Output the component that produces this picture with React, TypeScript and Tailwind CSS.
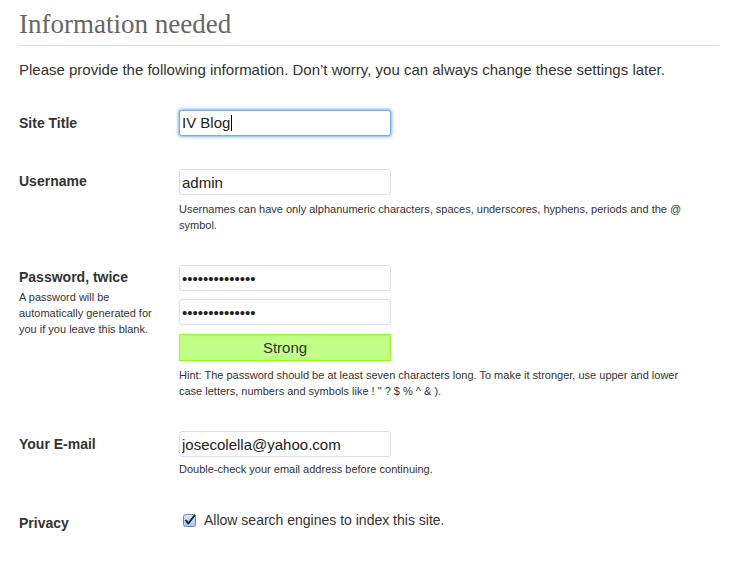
import { useState } from "react";

const labelCls = "w-[160px] shrink-0 text-[14px] font-bold text-[#333]";
const inputCls =
  "block w-[212px] h-[26px] px-[2px] rounded-[3px] border border-[#dfdfdf] bg-white text-[15px] text-[#222] outline-none";

function CheckIcon() {
  return (
    <svg width="13" height="13" viewBox="0 0 13 13" className="shrink-0">
      <defs>
        <linearGradient id="cb" x1="0" y1="0" x2="0" y2="1">
          <stop offset="0" stopColor="#dbe8f8" />
          <stop offset="1" stopColor="#a9c6ec" />
        </linearGradient>
      </defs>
      <rect x="0.5" y="0.5" width="12" height="12" rx="2" fill="url(#cb)" stroke="#6c87b0" />
      <path d="M3 6.5 L5.3 9.5 L11.5 1.5" fill="none" stroke="#15244a" strokeWidth="2" strokeLinecap="round" strokeLinejoin="round" />
    </svg>
  );
}

export default function App() {
  const [username, setUsername] = useState("admin");
  const [pass1, setPass1] = useState("abcdefghijklmn");
  const [pass2, setPass2] = useState("abcdefghijklmn");
  const [email, setEmail] = useState("josecolella@yahoo.com");

  return (
    <div
      className="min-h-screen bg-white pl-[19px] pr-[22px] text-[#333]"
      style={{ fontFamily: '"Liberation Sans", Arial, sans-serif' }}
    >
      {/* Heading */}
      <h1
        className="pt-[9px] pb-[6px] border-b border-[#dedede] text-[27px] leading-[30px] font-normal text-[#666]"
        style={{ fontFamily: '"Liberation Serif", Georgia, serif' }}
      >
        Information needed
      </h1>

      <p className="mt-[14px] text-[15px] leading-[20px]">
        Please provide the following information. Don’t worry, you can always change these settings later.
      </p>

      {/* Site title */}
      <div className="flex mt-[30px]">
        <div className={`${labelCls} leading-[26px]`}>Site Title</div>
        <div className="w-[212px] h-[26px] px-[2px] rounded-[3px] border border-[#7ab0e2] shadow-[0_0_3px_1px_rgba(91,157,217,0.8)] bg-white text-[15px] leading-[24px] text-[#222] flex items-center">
          <span>IV Blog</span>
          <span className="inline-block w-px h-[16px] bg-black ml-px" />
        </div>
      </div>

      {/* Username */}
      <div className="flex mt-[33px]">
        <div className={`${labelCls} leading-[24px]`}>Username</div>
        <div>
          <input className={inputCls} value={username} onChange={(e) => setUsername(e.target.value)} />
          <p className="mt-[6px] text-[11px] leading-4 whitespace-nowrap">
            Usernames can have only alphanumeric characters, spaces, underscores, hyphens, periods and the @
            <br />
            symbol.
          </p>
        </div>
      </div>

      {/* Password */}
      <div className="flex mt-[32px]">
        <div className={labelCls}>
          <div className="leading-[24px]">Password, twice</div>
          <p className="text-[11px] leading-4 font-normal">
            A password will be
            <br />
            automatically generated for
            <br />
            you if you leave this blank.
          </p>
        </div>
        <div>
          <input type="password" className={`${inputCls} text-[13px]`} value={pass1} onChange={(e) => setPass1(e.target.value)} />
          <input type="password" className={`${inputCls} text-[13px] mt-[8px]`} value={pass2} onChange={(e) => setPass2(e.target.value)} />
          <div className="mt-[9px] w-[212px] h-[27px] border border-[#8dff1c] bg-[#c1ff88] text-[15px] leading-[26px] text-center text-[#333]">
            Strong
          </div>
          <p className="mt-[6px] text-[11px] leading-4 whitespace-nowrap">
            Hint: The password should be at least seven characters long. To make it stronger, use upper and lower
            <br />
            case letters, numbers and symbols like ! " ? $ % ^ &amp; ).
          </p>
        </div>
      </div>

      {/* Email */}
      <div className="flex mt-[32px]">
        <div className={`${labelCls} leading-[26px]`}>Your E-mail</div>
        <div>
          <input className={`${inputCls} text-[14.7px]`} value={email} onChange={(e) => setEmail(e.target.value)} />
          <p className="mt-[4px] text-[11px] leading-4">Double-check your email address before continuing.</p>
        </div>
      </div>

      {/* Privacy */}
      <div className="flex mt-[30px] pb-[30px]">
        <div className={`${labelCls} leading-[20px] mt-[6px]`}>Privacy</div>
        <label className="flex items-center gap-[8px] pl-[4px] text-[14px] leading-[20px]">
          <CheckIcon />
          Allow search engines to index this site.
        </label>
      </div>
    </div>
  );
}
